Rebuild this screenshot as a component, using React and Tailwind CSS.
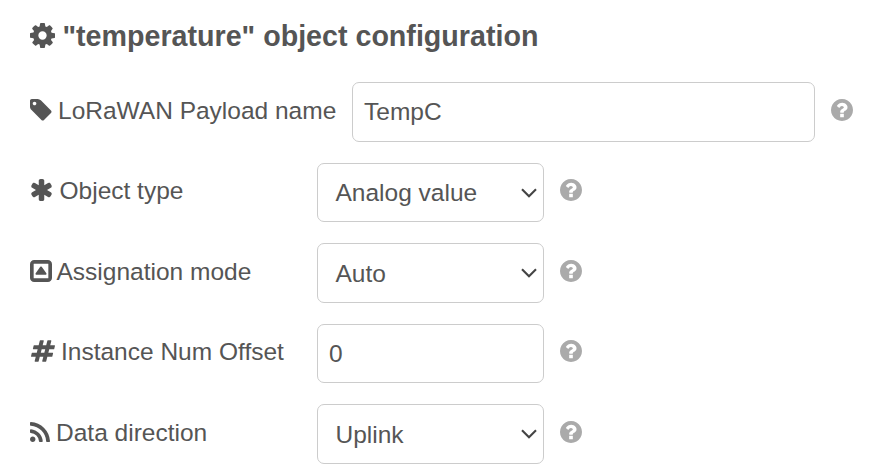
import React from "react";

function Glyph({ viewBox, d, className }) {
  return (
    <svg viewBox={viewBox} className={"block shrink-0 fill-current " + className} aria-hidden="true">
      <path fillRule="evenodd" d={d} />
    </svg>
  );
}

const COG =
  "M1152 896q0-106-75-181t-181-75-181 75-75 181 75 181 181 75 181-75 75-181zm512-109v222q0 12-8 23t-20 13l-185 28q-19 54-39 91 35 50 107 138 10 12 10 25t-9 23q-27 37-99 108t-94 71q-12 0-26-9l-138-108q-44 23-91 38-16 136-29 186-7 28-36 28h-222q-14 0-24.5-8.5t-11.5-21.5l-28-184q-49-16-90-37l-141 107q-10 9-25 9-14 0-25-11-126-114-165-168-7-10-7-23 0-12 8-23 15-21 51-66.5t54-70.5q-27-50-41-99l-183-27q-13-2-21-12.5t-8-23.5v-222q0-12 8-23t19-13l186-28q14-46 39-92-40-57-107-138-10-12-10-24 0-10 9-23 26-36 98.5-107.5t94.5-71.5q13 0 26 10l138 107q44-23 91-38 16-136 29-186 7-28 36-28h222q14 0 24.5 8.5t11.5 21.5l28 184q49 16 90 37l142-107q9-9 24-9 13 0 25 10 129 119 165 170 7 8 7 22 0 12-8 23-15 21-51 66.5t-54 70.5q26 50 41 98l183 28q13 2 21 12.5t8 23.5z";
const TAG =
  "M576 448q0-53-37.5-90.5t-90.5-37.5-90.5 37.5-37.5 90.5 37.5 90.5 90.5 37.5 90.5-37.5 37.5-90.5zm1067 576q0 53-37 90l-491 492q-39 37-91 37-53 0-90-37l-715-716q-38-37-64.5-101t-26.5-117v-416q0-52 38-90t90-38h416q53 0 117 26.5t102 64.5l715 714q37 39 37 91z";
const ASTERISK =
  "M1546 1050q46 26 59.5 77.5t-12.5 97.5l-64 110q-26 46-77.5 59.5t-97.5-12.5l-266-153v307q0 52-38 90t-90 38h-128q-52 0-90-38t-38-90v-307l-266 153q-46 26-97.5 12.5t-77.5-59.5l-64-110q-26-46-12.5-97.5t59.5-77.5l266-154-266-154q-46-26-59.5-77.5t12.5-97.5l64-110q26-46 77.5-59.5t97.5 12.5l266 153v-307q0-52 38-90t90-38h128q52 0 90 38t38 90v307l266-153q46-26 97.5-12.5t77.5 59.5l64 110q26 46 12.5 97.5t-59.5 77.5l-266 154z";
const CARET_SQUARE =
  "M1273 1117q-18 35-57 35h-640q-39 0-57-35-18-35 5-66l320-448q19-27 52-27t52 27l320 448q23 31 5 66zM1408 1376v-960q0-14-9-23t-23-9h-960q-14 0-23 9t-9 23v960q0 14 9 23t23 9h960q14 0 23-9t9-23zM1664 416v960q0 119-84.5 203.5t-203.5 84.5h-960q-119 0-203.5-84.5t-84.5-203.5v-960q0-119 84.5-203.5t203.5-84.5h960q119 0 203.5 84.5t84.5 203.5z";
const HASHTAG =
  "M991 1024l64-256h-254l-64 256h254zm768-504l-56 224q-7 24-31 24h-327l-64 256h311q15 0 25 12 10 14 6 28l-56 224q-5 24-31 24h-327l-81 328q-7 24-31 24h-224q-16 0-26-12-9-12-6-28l78-312h-254l-81 328q-7 24-31 24h-225q-15 0-25-12-9-12-6-28l78-312h-311q-15 0-25-12-9-12-6-28l56-224q7-24 31-24h327l64-256h-311q-15 0-25-12-10-14-6-28l56-224q5-24 31-24h327l81-328q7-24 32-24h224q15 0 25 12 9 12 6 28l-78 312h254l81-328q7-24 32-24h224q15 0 25 12 9 12 6 28l-78 312h311q15 0 25 12 9 12 6 28z";
const RSS =
  "M576 1344q0 80-56 136t-136 56-136-56-56-136 56-136 136-56 136 56 56 136zm512 123q2 28-17 48-18 21-47 21h-135q-25 0-43-16.5t-20-41.5q-22-229-184.5-391.5t-391.5-184.5q-25-2-41.5-20t-16.5-43v-135q0-29 21-47 17-17 43-17h5q160 13 306 80.5t259 181.5q114 113 181.5 259t80.5 306zm512 2q2 27-18 47-18 20-46 20h-143q-26 0-44.5-17.5t-19.5-42.5q-12-215-101-408.5t-231.5-336-336-231.5-408.5-102q-25-1-42.5-19.5t-17.5-43.5v-143q0-28 20-46 18-18 44-18h3q262 13 501.5 120t425.5 294q187 186 294 425.5t120 501.5z";
const QUESTION =
  "M1024 1376v-192q0-14-9-23t-23-9h-192q-14 0-23 9t-9 23v192q0 14 9 23t23 9h192q14 0 23-9t9-23zm256-672q0-88-55.5-163t-138.5-116-170-41q-243 0-371 213-15 24 8 42l132 100q7 6 19 6 16 0 25-12 53-68 86-92 34-24 86-24 48 0 85.5 26t37.5 59q0 38-20 61t-68 45q-63 28-115.5 86.5t-52.5 125.5v36q0 14 9 23t23 9h192q14 0 23-9t9-23q0-19 21.5-49.5t54.5-49.5q32-18 49-28.5t46-35 44.5-48 28-60.5 12.5-81zm384 192q0 209-103 385.5t-279.5 279.5-385.5 103-385.5-103-279.5-279.5-103-385.5 103-385.5 279.5-279.5 385.5-103 385.5 103 279.5 279.5 103 385.5z";

function Row({ icon, label, labelClass, className, children }) {
  return (
    <div className={"flex items-start " + className}>
      <label className={"flex h-full shrink-0 items-start whitespace-nowrap " + labelClass}>
        {icon}
        <span className="-mt-[3px]">{label}</span>
      </label>
      {children}
      <Glyph viewBox="128 128 1536 1536" d={QUESTION} className="ml-[15.5px] size-[22px] text-[#aaa]" />
    </div>
  );
}

function TextField({ value, className }) {
  return (
    <div className={"flex items-center rounded-[7px] border border-[#ccc] pl-[11px] " + className}>
      <span>{value}</span>
    </div>
  );
}

function SelectField({ value, className }) {
  return (
    <div
      className={
        "flex w-[227px] items-center justify-between rounded-[7px] border border-[#ccc] pr-[6px] pl-[17.5px] " +
        className
      }
    >
      <span className="mt-px">{value}</span>
      <svg viewBox="0 0 16 10" className="h-[10px] w-4" fill="none" stroke="#444" strokeWidth="2.1">
        <path d="M1 1.2L8 8.2L15 1.2" />
      </svg>
    </div>
  );
}

export default function App() {
  return (
    <main className="h-[475px] w-[879px] overflow-hidden bg-white pl-[30px] font-['Liberation_Sans',Arial,sans-serif] text-[24.5px] leading-[30px] text-[#555]">
      <h1 className="flex h-[99px] items-start pt-[19px] text-[28.65px] leading-[34px] font-bold">
        <Glyph viewBox="128 128 1536 1536" d={COG} className="mt-[4px] mr-[7.5px] size-[25px]" />
        <span>"temperature" object configuration</span>
      </h1>
      <Row
        className="h-[80px]"
        labelClass="w-[322px]"
        label="LoRaWAN Payload name"
        icon={<Glyph viewBox="128 128 1515 1515" d={TAG} className="mr-[6.5px] size-[21.5px]" />}
      >
        <TextField value="TempC" className="-mt-[17px] h-[60px] w-[463px]" />
      </Row>
      <Row
        className="h-[81px]"
        labelClass="w-[287px]"
        label="Object type"
        icon={<Glyph viewBox="180 128 1432 1536" d={ASTERISK} className="mr-[7.5px] ml-[1px] h-[22px] w-[21px]" />}
      >
        <SelectField value="Analog value" className="-mt-[16px] h-[59px]" />
      </Row>
      <Row
        className="h-[80px]"
        labelClass="w-[287px]"
        label="Assignation mode"
        icon={<Glyph viewBox="128 128 1536 1536" d={CARET_SQUARE} className="mr-[4.5px] size-[22px]" />}
      >
        <SelectField value="Auto" className="-mt-[17px] h-[60px]" />
      </Row>
      <Row
        className="h-[81px]"
        labelClass="w-[287px]"
        label="Instance Num Offset"
        icon={<Glyph viewBox="32 128 1728 1536" d={HASHTAG} className="mr-[6.5px] ml-[0.5px] h-[22px] w-6" />}
      >
        <TextField value="0" className="-mt-[16px] h-[59px] w-[227px]" />
      </Row>
      <Row
        className="h-[54px]"
        labelClass="w-[287px]"
        label="Data direction"
        icon={<Glyph viewBox="192 128 1408 1408" d={RSS} className="mt-[0.5px] mr-[6px] size-5" />}
      >
        <SelectField value="Uplink" className="-mt-[17px] h-[60px]" />
      </Row>
    </main>
  );
}
